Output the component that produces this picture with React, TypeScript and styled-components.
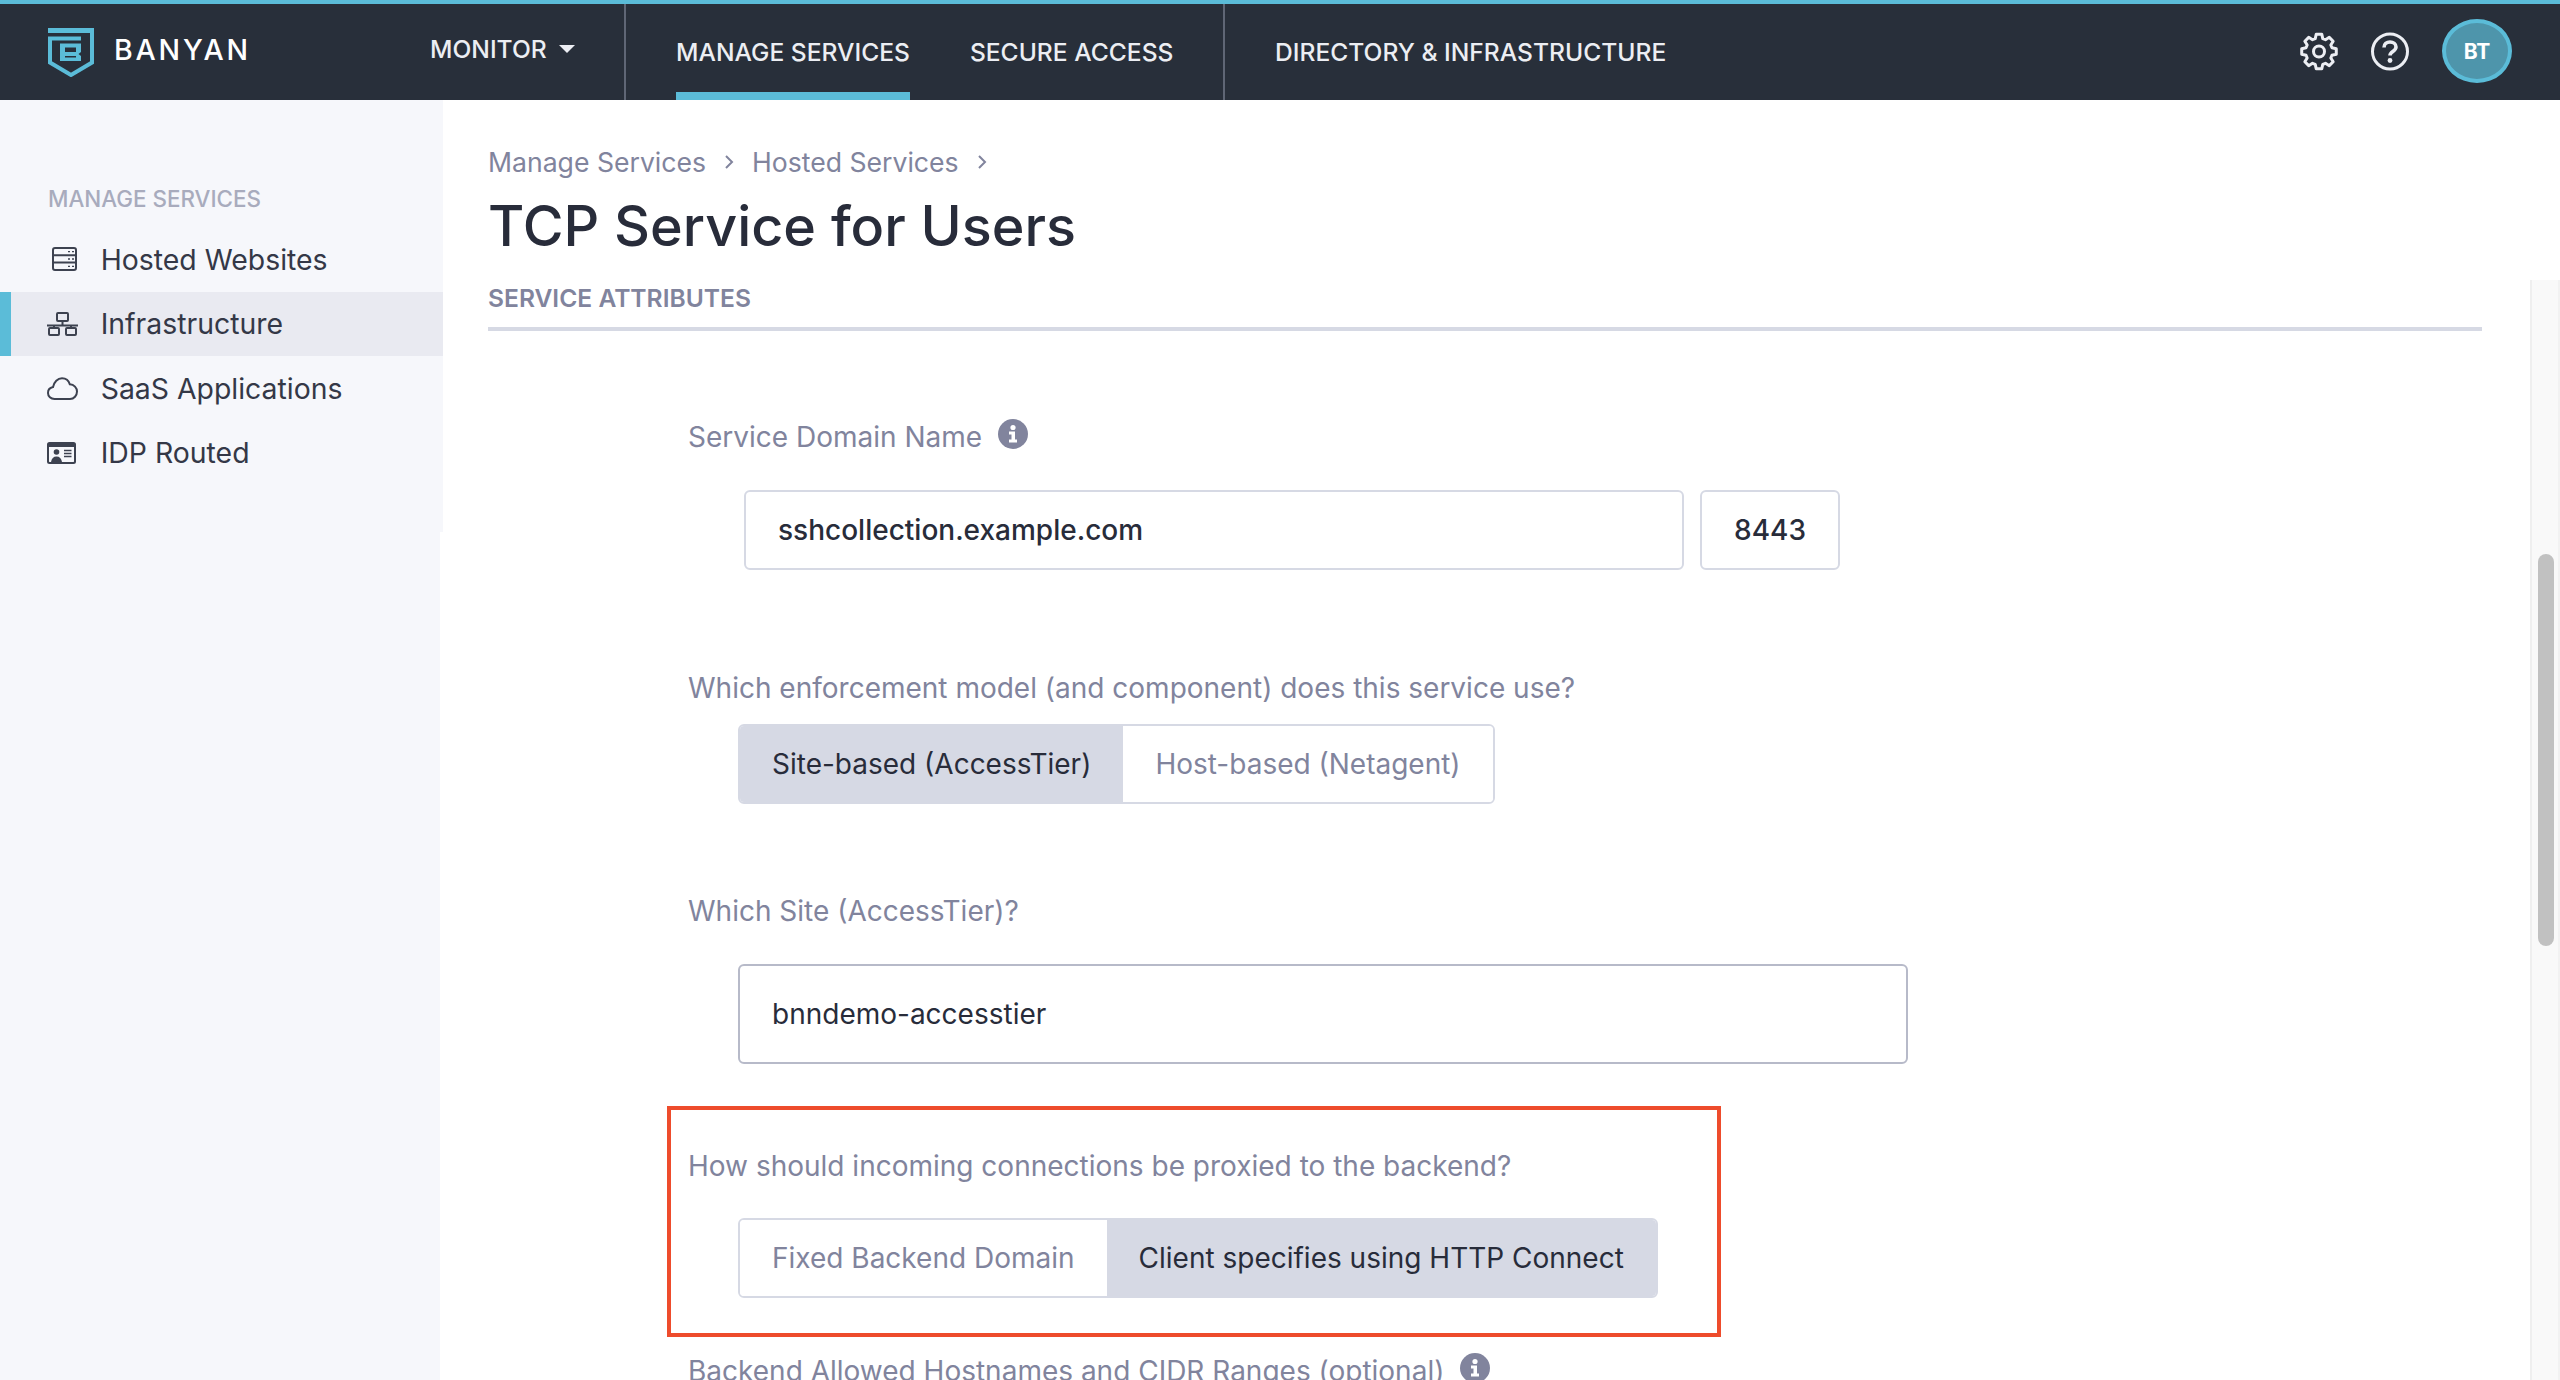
import React from 'react';
import styled, { createGlobalStyle } from 'styled-components';

const GlobalStyle = createGlobalStyle`
  html, body {
    margin: 0;
    padding: 0;
    background: #fff;
  }
  * {
    box-sizing: border-box;
  }
`;

const Page = styled.div`
  position: relative;
  width: 2560px;
  height: 1380px;
  overflow: hidden;
  background: #fff;
  font-family: Inter, 'Liberation Sans', sans-serif;
`;

const TopBar = styled.header`
  display: flex;
  align-items: stretch;
  height: 100px;
  background: #282f3a;
  border-top: 4px solid #5bbcd8;
`;

const Brand = styled.div`
  flex: none;
  display: flex;
  align-items: center;
  width: 430px;
  padding-left: 48px;
  gap: 20px;
`;

const BrandName = styled.span`
  margin-top: -6px;
  color: #fff;
  font-size: 28.5px;
  font-weight: 500;
  letter-spacing: 2.8px;
`;

const MonitorMenu = styled.div`
  flex: none;
  display: flex;
  align-items: center;
  gap: 12px;
  width: 194px;
  white-space: nowrap;
  color: #eceef3;
  font-size: 24.6px;
  font-weight: 500;
  margin-top: -6px;
`;

const Caret = styled.span`
  width: 0;
  height: 0;
  border-left: 8px solid transparent;
  border-right: 8px solid transparent;
  border-top: 8px solid #eceef3;
`;

const NavGroup = styled.nav<{ $width: number }>`
  flex: none;
  display: flex;
  width: ${(p) => p.$width}px;
  padding-left: 50px;
  gap: 60px;
  border-left: 2px solid #5f6675;
`;

const NavTab = styled.a<{ $active?: boolean }>`
  display: flex;
  align-items: center;
  color: #eceef3;
  font-size: 24.6px;
  font-weight: 500;
  white-space: nowrap;
  border-bottom: 8px solid ${(p) => (p.$active ? '#5bbcd8' : 'transparent')};
  padding-top: 8px;
`;

const TopActions = styled.div`
  display: flex;
  align-items: center;
  margin: -2px 0 0 auto;
  padding-right: 48px;
  gap: 33px;
  color: #eceef3;
`;

const Avatar = styled.div`
  display: flex;
  align-items: center;
  justify-content: center;
  width: 70px;
  height: 64px;
  border-radius: 50%;
  border: 4px solid #5bbcd8;
  background: #4e95ab;
  color: #fff;
  font-size: 21px;
  font-weight: 700;
`;

const Shell = styled.div`
  display: flex;
  height: 1280px;
`;

const Sidebar = styled.aside`
  flex: none;
  width: 443px;
  padding-top: 84px;
  background:
    linear-gradient(#f6f7fb, #f6f7fb) 0 0 / 443px 432px no-repeat,
    linear-gradient(#f6f7fb, #f6f7fb) 0 0 / 440px 100% no-repeat;
`;

const SideHeading = styled.div`
  padding-left: 48px;
  height: 30px;
  line-height: 30px;
  color: #a8abbd;
  font-size: 22.4px;
  font-weight: 500;
  margin-bottom: 13px;
`;

const SideItem = styled.a<{ $active?: boolean }>`
  display: flex;
  align-items: center;
  height: 64.5px;
  padding-left: ${(p) => (p.$active ? '36px' : '47px')};
  gap: 22.7px;
  color: #343847;
  font-size: 28.4px;
  background: ${(p) => (p.$active ? '#e9eaf1' : 'transparent')};
  border-left: ${(p) => (p.$active ? '11px solid #5bbcd8' : '0')};
`;

const SideIcon = styled.span`
  display: flex;
  width: 31px;
  color: #3d4250;
`;

const Main = styled.main`
  flex: none;
  width: 2039px;
  padding: 45px 0 0 45px;
`;

const Crumbs = styled.div`
  display: flex;
  align-items: center;
  height: 34px;
  gap: 16px;
  color: #81849d;
  font-size: 26.6px;
`;

const Title = styled.h1`
  margin: 12px 0 0;
  height: 70px;
  line-height: 70px;
  color: #282c3a;
  font-size: 55.7px;
  font-weight: 500;
`;

const SectionHeading = styled.div`
  width: 1994px;
  margin-top: 21px;
  height: 49px;
  line-height: 32px;
  padding-bottom: 13px;
  border-bottom: 4px solid #d6d9e4;
  color: #81849d;
  font-size: 24.6px;
  font-weight: 600;
`;

const Form = styled.div`
  padding-left: 200px;
`;

const Label = styled.div<{ $top: number }>`
  display: flex;
  align-items: center;
  gap: 16px;
  height: 34px;
  margin-top: ${(p) => p.$top}px;
  color: #81849d;
  font-size: 28px;
  white-space: nowrap;
`;

const InputRow = styled.div`
  display: flex;
  gap: 16px;
  margin: 36px 0 0 56px;
`;

const TextBox = styled.div<{ $width: number; $height?: number; $center?: boolean; $left?: number }>`
  display: flex;
  align-items: center;
  justify-content: ${(p) => (p.$center ? 'center' : 'flex-start')};
  width: ${(p) => p.$width}px;
  height: ${(p) => p.$height ?? 80}px;
  margin-left: ${(p) => p.$left ?? 0}px;
  padding: ${(p) => (p.$center ? '0' : '0 32px')};
  border: 2px solid #d6d9e4;
  border-radius: 6px;
  color: #282c3a;
  font-size: 28px;
  font-weight: 500;
`;

const SelectBox = styled(TextBox)`
  margin-top: 36px;
  border-color: #b7bac9;
  font-weight: 400;
`;

const Segmented = styled.div<{ $top: number }>`
  display: inline-flex;
  height: 80px;
  margin: ${(p) => p.$top}px 0 0 50px;
  border: 2px solid #d6d9e4;
  border-radius: 6px;
  overflow: hidden;
`;

const SegmentOption = styled.div<{ $selected?: boolean }>`
  display: flex;
  align-items: center;
  padding: 0 32px;
  background: ${(p) => (p.$selected ? '#d6d9e4' : '#fff')};
  color: ${(p) => (p.$selected ? '#282c3a' : '#81849d')};
  font-size: 28px;
  white-space: nowrap;
`;

const Highlight = styled.section`
  width: 1054px;
  margin: 42px 0 0 -21px;
  padding: 39px 17px 35px;
  border: 4px solid #ee4c2c;
`;

const ScrollTrack = styled.div`
  position: absolute;
  top: 280px;
  right: 0;
  bottom: 0;
  width: 30px;
  background: #f9f9f9;
  border-left: 2px solid #efefef;
  border-right: 2px solid #f2f2f2;
`;

const ScrollThumb = styled.div`
  position: absolute;
  top: 274px;
  left: 6px;
  width: 16px;
  height: 392px;
  border-radius: 8px;
  background: #c1c1c1;
`;

const InfoDot = styled.span`
  display: inline-flex;
  margin-top: -6px;
  color: #81849d;
`;

const Logo = () => (
  <svg width="46" height="49" viewBox="0 0 46 49" fill="none">
    <path d="M0 0H46V5H0Z" fill="#5bbcd8" />
    <path d="M44 2V34.500L23 47L2 34.500V10.500H33" stroke="#5bbcd8" strokeWidth="4" />
    <path
      d="M12 15.500H33V24L30.500 26L33 28V33H12ZM17 19.500V24H28V19.500ZM17 28V29.500H28V28Z"
      fill="#5bbcd8"
      fillRule="evenodd"
    />
  </svg>
);

const gearPath = (() => {
  const teeth = 8;
  const points: string[] = [];
  for (let i = 0; i < teeth; i++) {
    const a = ((Math.PI * 2) / teeth) * i - Math.PI / 2;
    const step = (Math.PI * 2) / teeth;
    const pairs: [number, number][] = [
      [13.5, a - step * 0.36],
      [17.5, a - step * 0.2],
      [17.5, a + step * 0.2],
      [13.5, a + step * 0.36],
    ];
    pairs.forEach(([r, t]) => {
      points.push(`${(19 + r * Math.cos(t)).toFixed(2)} ${(19.5 + r * Math.sin(t)).toFixed(2)}`);
    });
  }
  return `M${points.join('L')}Z`;
})();

const GearIcon = () => (
  <svg width="38" height="39" viewBox="0 0 38 39" fill="none" stroke="currentColor" strokeWidth="3" strokeLinejoin="round">
    <path d={gearPath} />
    <circle cx="19" cy="19.500" r="5.500" />
  </svg>
);

const HelpIcon = () => (
  <svg width="38" height="39" viewBox="0 0 38 39" fill="none" stroke="currentColor">
    <circle cx="19" cy="19.500" r="17.500" strokeWidth="3" />
    <path d="M13 15.500c0-3.500 2.700-5.500 6-5.500s6 2 6 5c0 4.500-6 4.500-6 8.500" strokeWidth="3.600" />
    <circle cx="19" cy="28.500" r="2.400" fill="currentColor" stroke="none" />
  </svg>
);

const ServerIcon = () => (
  <svg width="31" height="24" viewBox="0 0 31 24" fill="none" stroke="currentColor" strokeWidth="2">
    <rect x="6" y="1" width="23" height="22" rx="2" />
    <path d="M6 8.300H29M6 15.600H29" />
    <path d="M21 4.600H23M25 4.600H27M21 12H23M25 12H27M21 19.400H23M25 19.400H27" strokeWidth="1.400" />
  </svg>
);

const NetworkIcon = () => (
  <svg width="31" height="24" viewBox="0 0 31 24" fill="none" stroke="currentColor" strokeWidth="2">
    <rect x="10" y="1" width="11" height="8" rx="1" />
    <path d="M15.500 9V13M0 13.500H31" />
    <rect x="2" y="16" width="10" height="7" rx="1" />
    <rect x="19" y="16" width="10" height="7" rx="1" />
    <path d="M7 13.500V16M24 13.500V16" />
  </svg>
);

const CloudIcon = () => (
  <svg width="31" height="23" viewBox="0 0 31 23" fill="none" stroke="currentColor" strokeWidth="2">
    <path d="M7.500 22C3.800 22 1 19.300 1 16c0-3 2.200-5.300 5-5.900C7 5 10.700 1.200 15 1.200c3.800 0 6.800 2.600 7.800 6.100 4.300.2 7.200 3.600 7.200 7.200 0 4-3 7.500-7 7.500z" />
  </svg>
);

const IdCardIcon = () => (
  <svg width="31" height="22" viewBox="0 0 31 22" fill="none">
    <path
      d="M2.500 0h24A2.500 2.500 0 0 1 29 2.500v17a2.500 2.500 0 0 1-2.500 2.500h-24A2.500 2.500 0 0 1 0 19.500v-17A2.500 2.500 0 0 1 2.500 0ZM2 5v14.500c0 .3.200.5.500.5h24c.3 0 .5-.2.5-.5V5Z"
      fill="currentColor"
      fillRule="evenodd"
    />
    <circle cx="9.500" cy="10" r="2.800" fill="currentColor" />
    <path d="M4 20c.5-3.500 2.500-5.500 5.500-5.500S14.500 16.500 15 20Z" fill="currentColor" />
    <path d="M17 8.500H24.500M17 11.500H24.500M17 14.500H24.500" stroke="currentColor" strokeWidth="1.600" />
  </svg>
);

const ChevronIcon = () => (
  <svg width="14" height="18" viewBox="0 0 14 18" fill="none" stroke="#81849d" strokeWidth="2">
    <path d="M4 3L10 9L4 15" />
  </svg>
);

const InfoIcon = () => (
  <svg width="30" height="30" viewBox="0 0 30 30">
    <circle cx="15" cy="15" r="15" fill="currentColor" />
    <circle cx="15" cy="8.500" r="2.600" fill="#fff" />
    <path d="M11 12.500H17V20.500H19V23.500H11V20.500H13.500V15.500H11Z" fill="#fff" />
  </svg>
);

const sideItems = [
  { label: 'Hosted Websites', icon: <ServerIcon /> },
  { label: 'Infrastructure', icon: <NetworkIcon />, active: true },
  { label: 'SaaS Applications', icon: <CloudIcon /> },
  { label: 'IDP Routed', icon: <IdCardIcon /> },
];

const App = () => {
  return (
    <Page>
      <GlobalStyle />
      <TopBar>
        <Brand>
          <Logo />
          <BrandName>BANYAN</BrandName>
        </Brand>
        <MonitorMenu>
          MONITOR <Caret />
        </MonitorMenu>
        <NavGroup $width={599}>
          <NavTab $active>MANAGE SERVICES</NavTab>
          <NavTab>SECURE ACCESS</NavTab>
        </NavGroup>
        <NavGroup $width={600}>
          <NavTab>DIRECTORY &amp; INFRASTRUCTURE</NavTab>
        </NavGroup>
        <TopActions>
          <GearIcon />
          <HelpIcon />
          <Avatar>BT</Avatar>
        </TopActions>
      </TopBar>
      <Shell>
        <Sidebar>
          <SideHeading>MANAGE SERVICES</SideHeading>
          {sideItems.map((item) => (
            <SideItem key={item.label} $active={item.active}>
              <SideIcon>{item.icon}</SideIcon>
              {item.label}
            </SideItem>
          ))}
        </Sidebar>
        <Main>
          <Crumbs>
            Manage Services <ChevronIcon /> Hosted Services <ChevronIcon />
          </Crumbs>
          <Title>TCP Service for Users</Title>
          <SectionHeading>SERVICE ATTRIBUTES</SectionHeading>
          <Form>
            <Label $top={89}>
              Service Domain Name
              <InfoDot>
                <InfoIcon />
              </InfoDot>
            </Label>
            <InputRow>
              <TextBox $width={940}>sshcollection.example.com</TextBox>
              <TextBox $width={140} $center>
                8443
              </TextBox>
            </InputRow>
            <Label $top={101}>Which enforcement model (and component) does this service use?</Label>
            <Segmented $top={19}>
              <SegmentOption $selected>Site-based (AccessTier)</SegmentOption>
              <SegmentOption>Host-based (Netagent)</SegmentOption>
            </Segmented>
            <Label $top={90}>Which Site (AccessTier)?</Label>
            <SelectBox $width={1170} $height={100} $left={50}>
              bnndemo-accesstier
            </SelectBox>
            <Highlight>
              <Label $top={0}>How should incoming connections be proxied to the backend?</Label>
              <Segmented $top={35}>
                <SegmentOption>Fixed Backend Domain</SegmentOption>
                <SegmentOption $selected>Client specifies using HTTP Connect</SegmentOption>
              </Segmented>
            </Highlight>
            <Label $top={17}>
              Backend Allowed Hostnames and CIDR Ranges (optional)
              <InfoDot>
                <InfoIcon />
              </InfoDot>
            </Label>
          </Form>
        </Main>
      </Shell>
      <ScrollTrack>
        <ScrollThumb />
      </ScrollTrack>
    </Page>
  );
};

export default App;
